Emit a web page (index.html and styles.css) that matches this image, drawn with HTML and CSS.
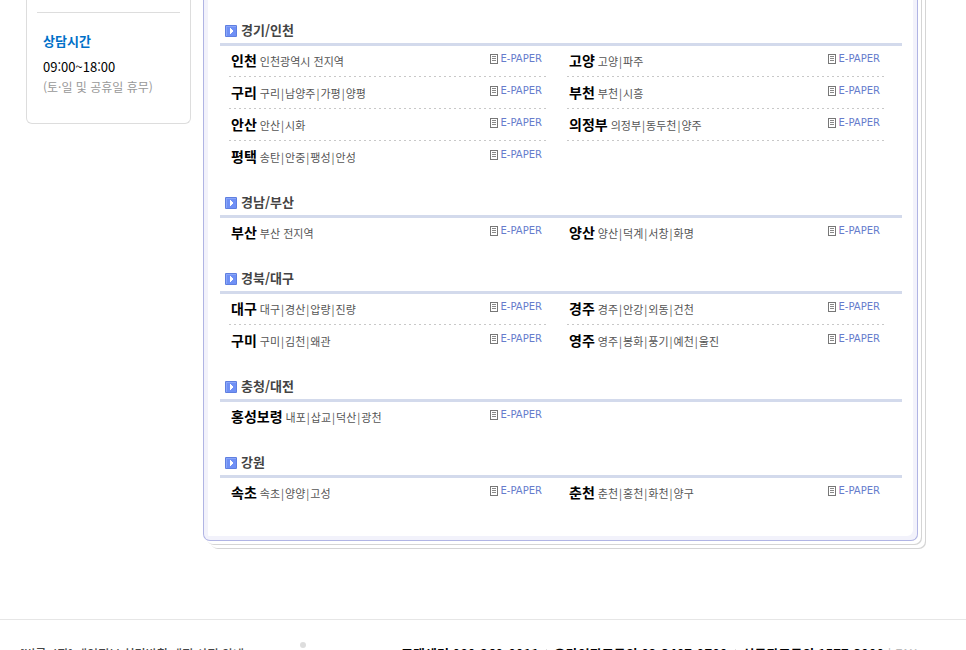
FILE: index.html
```html
<!DOCTYPE html>
<html lang="ko">
<head>
  <meta charset="UTF-8">
  <meta name="viewport" content="width=device-width, initial-scale=1.0">
  <title>지역별 E-PAPER</title>
  <link rel="stylesheet" href="styles.css">
</head>
<body>
  <!-- shared icons -->
  <svg class="defs" width="0" height="0" aria-hidden="true">
    <symbol id="arrow" viewBox="0 0 12 12">
      <rect width="12" height="12" rx="1" fill="#5f7fe0"/>
      <rect x="1" y="1" width="10" height="10" fill="#8aa6f8"/>
      <rect x="2" y="2" width="9" height="9" fill="#6f90f5"/>
      <path d="M5 3h1v1h1v1h1v2h-1v1h-1v1h-1z" fill="#fff"/>
    </symbol>
    <symbol id="paper" viewBox="0 0 8 10">
      <path d="M0 0h8v10H0z" fill="#777"/>
      <path d="M1 1h6v8H1z" fill="#fff"/>
      <path d="M2 2h4v1H2zM2 4h4v1H2zM2 6h4v1H2z" fill="#888"/>
    </symbol>
  </svg>

  <div class="page">
    <aside class="side">
      <div class="side-box">
        <hr>
        <h3>상담시간</h3>
        <p class="time">09:00~18:00</p>
        <p class="note">(토·일 및 공휴일 휴무)</p>
      </div>
    </aside>

    <main class="panel">
      <section class="region">
        <h2><svg class="arrow"><use href="#arrow"/></svg>경기/인천</h2>
        <ul class="areas">
          <li><p><strong>인천</strong> 인천광역시 전지역</p><a href="#"><svg><use href="#paper"/></svg>E-PAPER</a></li>
          <li><p><strong>고양</strong> 고양<i>|</i>파주</p><a href="#"><svg><use href="#paper"/></svg>E-PAPER</a></li>
          <li><p><strong>구리</strong> 구리<i>|</i>남양주<i>|</i>가평<i>|</i>양평</p><a href="#"><svg><use href="#paper"/></svg>E-PAPER</a></li>
          <li><p><strong>부천</strong> 부천<i>|</i>시흥</p><a href="#"><svg><use href="#paper"/></svg>E-PAPER</a></li>
          <li><p><strong>안산</strong> 안산<i>|</i>시화</p><a href="#"><svg><use href="#paper"/></svg>E-PAPER</a></li>
          <li><p><strong>의정부</strong> 의정부<i>|</i>동두천<i>|</i>양주</p><a href="#"><svg><use href="#paper"/></svg>E-PAPER</a></li>
          <li class="last"><p><strong>평택</strong> 송탄<i>|</i>안중<i>|</i>팽성<i>|</i>안성</p><a href="#"><svg><use href="#paper"/></svg>E-PAPER</a></li>
        </ul>
      </section>

      <section class="region">
        <h2><svg class="arrow"><use href="#arrow"/></svg>경남/부산</h2>
        <ul class="areas">
          <li class="last"><p><strong>부산</strong> 부산 전지역</p><a href="#"><svg><use href="#paper"/></svg>E-PAPER</a></li>
          <li class="last"><p><strong>양산</strong> 양산<i>|</i>덕계<i>|</i>서창<i>|</i>화명</p><a href="#"><svg><use href="#paper"/></svg>E-PAPER</a></li>
        </ul>
      </section>

      <section class="region">
        <h2><svg class="arrow"><use href="#arrow"/></svg>경북/대구</h2>
        <ul class="areas">
          <li><p><strong>대구</strong> 대구<i>|</i>경산<i>|</i>압량<i>|</i>진량</p><a href="#"><svg><use href="#paper"/></svg>E-PAPER</a></li>
          <li><p><strong>경주</strong> 경주<i>|</i>안강<i>|</i>외동<i>|</i>건천</p><a href="#"><svg><use href="#paper"/></svg>E-PAPER</a></li>
          <li class="last"><p><strong>구미</strong> 구미<i>|</i>김천<i>|</i>왜관</p><a href="#"><svg><use href="#paper"/></svg>E-PAPER</a></li>
          <li class="last"><p><strong>영주</strong> 영주<i>|</i>봉화<i>|</i>풍기<i>|</i>예천<i>|</i>울진</p><a href="#"><svg><use href="#paper"/></svg>E-PAPER</a></li>
        </ul>
      </section>

      <section class="region">
        <h2><svg class="arrow"><use href="#arrow"/></svg>충청/대전</h2>
        <ul class="areas">
          <li class="last"><p><strong>홍성보령</strong> 내포<i>|</i>삽교<i>|</i>덕산<i>|</i>광천</p><a href="#"><svg><use href="#paper"/></svg>E-PAPER</a></li>
        </ul>
      </section>

      <section class="region">
        <h2><svg class="arrow"><use href="#arrow"/></svg>강원</h2>
        <ul class="areas">
          <li class="last"><p><strong>속초</strong> 속초<i>|</i>양양<i>|</i>고성</p><a href="#"><svg><use href="#paper"/></svg>E-PAPER</a></li>
          <li class="last"><p><strong>춘천</strong> 춘천<i>|</i>홍천<i>|</i>화천<i>|</i>양구</p><a href="#"><svg><use href="#paper"/></svg>E-PAPER</a></li>
        </ul>
      </section>
    </main>
  </div>

  <footer class="footer">
    <a class="notice" href="#">[벼룩시장] 개인정보 처리방침 개정 사전 안내</a>
    <span class="dot"></span>
    <ul class="contact">
      <li>고객센터 080-269-0011</li>
      <li>온라인광고문의 02-3407-9700</li>
      <li>신문광고문의 1577-3000 <small>| FAX</small></li>
    </ul>
  </footer>
</body>
</html>
```
FILE: styles.css
```css
* {
  box-sizing: border-box;
}
html {
  height: 100%;
  overflow: hidden;
}
body {
  margin: 0;
  height: 100%;
  overflow: hidden;
  background: #fff;
  color: #000;
  font-family: "Noto Sans CJK KR", sans-serif;
  font-size: 13px;
}
h2, h3, p, ul {
  margin: 0;
  padding: 0;
}
ul {
  list-style: none;
}
a {
  text-decoration: none;
}
.defs {
  display: block;
}
.page {
  display: flex;
  align-items: flex-start;
  gap: 12px;
  margin-top: -20px;
  padding: 0 48px 0 26px;
}

/* left box */
.side {
  flex: 0 0 165px;
}
.side-box {
  padding: 32px 10px 26px;
  border: 1px solid #ddd;
  border-top: 0;
  border-radius: 0 0 6px 6px;
}
.side-box hr {
  margin: 0 0 18px;
  border: 0;
  border-top: 1px solid #ddd;
}
.side-box h3,
.side-box p {
  padding-left: 6px;
  line-height: 20px;
}
.side-box h3 {
  margin-bottom: 6px;
  color: #0070c8;
  font-size: 13px;
}
.side-box .note {
  color: #999;
  font-size: 12px;
}

/* region list, drawn as a stack of sheets */
.panel {
  flex: 1;
  padding: 41px 15px 31px 16px;
  border: 1px solid #b0b4e4;
  border-top: 0;
  border-radius: 0 0 7px 7px;
  box-shadow: inset 4px 0 #f2f2fb, inset -4px -4px #f2f2fb,
    3px 3px #fff, 4px 4px #d5d5d5, 7px 7px #fff, 8px 8px #d5d5d5;
}
.region + .region {
  margin-top: 20px;
}
.region h2 {
  display: flex;
  align-items: center;
  gap: 4px;
  padding: 0 0 4px 5px;
  border-bottom: 3px solid #d3daec;
  color: #444;
  font-size: 13px;
  line-height: 18px;
}
.arrow {
  width: 12px;
  height: 12px;
  margin-top: 2px;
}
.areas {
  display: grid;
  grid-template-columns: 1fr 1fr;
  gap: 1px 21px;
  padding: 0 18px 0 9px;
}
.areas li {
  display: flex;
  justify-content: space-between;
  align-items: flex-start;
  height: 31px;
  padding: 4px 4px 0 2px;
  background: repeating-linear-gradient(90deg, #c8c8c8 0 2px, transparent 2px 5px) bottom / 100% 1px no-repeat;
}
.areas li.last {
  background: none;
}
.areas p {
  color: #555;
  font-size: 11px;
  line-height: 20px;
}
.areas strong {
  color: #000;
  font-size: 14px;
  line-height: 20px;
}
.areas i {
  margin: 0 1px;
  font-style: normal;
}
.areas a {
  display: flex;
  align-items: center;
  gap: 3px;
  color: #667ccc;
  font-family: "DejaVu Sans", sans-serif;
  font-size: 10px;
  line-height: 18px;
}
.areas svg {
  width: 8px;
  height: 10px;
}

/* footer */
.footer {
  display: flex;
  align-items: flex-start;
  margin-top: 78px;
  padding: 22px 20px 0;
  border-top: 1px solid #e6e6e6;
  line-height: 24px;
}
.notice {
  flex: 0 0 280px;
  color: #444;
  font-size: 12px;
  font-weight: 500;
  white-space: nowrap;
}
.dot {
  width: 6px;
  height: 6px;
  border-radius: 50%;
  background: #ddd;
}
.contact {
  display: flex;
  margin-left: 95px;
  font-weight: bold;
  white-space: nowrap;
}
.contact li + li {
  margin-left: 7px;
}
.contact li + li::before {
  content: "";
  display: inline-block;
  width: 1px;
  height: 10px;
  margin-right: 7px;
  background: #ddd;
}
.contact small {
  color: #bbb;
  font-size: 13px;
  font-weight: normal;
}
```
